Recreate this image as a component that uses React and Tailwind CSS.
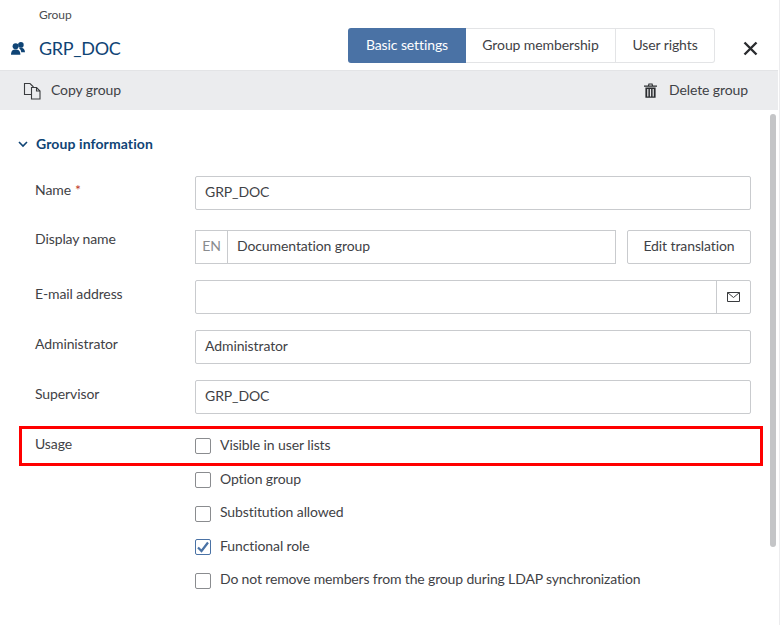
import React from "react";

const Row = ({ label, req, children, className = "mb-4", labelClass = "pt-[4px]" }) => (
  <div className={`flex items-start ${className}`}>
    <div className={`w-[160px] text-[#3f4246] leading-[20px] ${labelClass}`}>
      {label}
      {req && <span className="text-[#c0392b] ml-[4px]">*</span>}
    </div>
    <div className="flex-1 min-w-0 flex">{children}</div>
  </div>
);

const Input = ({ value }) => (
  <div className="flex-1 h-[34px] border border-[#c9cbce] rounded-[2px] px-[9px] pb-[3px] flex items-center text-[#3f4246]">{value}</div>
);

const Check = ({ label, checked, h, textClass = "-mt-[3px]" }) => (
  <div className={`flex items-center ${h}`}>
    <span className={`w-[16px] h-[16px] rounded-[2px] border flex items-center justify-center ${checked ? "border-[#4a72a5]" : "border-[#8a8c8f]"}`}>
      {checked && (
        <svg width="12" height="12" viewBox="0 0 12 12" fill="none" stroke="#4a72a5" strokeWidth="2.2">
          <path d="M1 6.5 L4.5 10 L11 1.5" />
        </svg>
      )}
    </span>
    <span className={`ml-[9px] text-[#3f4246] leading-[20px] ${textClass}`}>{label}</span>
  </div>
);

export default function App() {
  return (
    <div className="relative w-[780px] h-[625px] overflow-hidden bg-white text-[14px] tracking-[-0.1px]" style={{ fontFamily: 'Lato, sans-serif' }}>
      <div className="w-[778px] h-full flex flex-col">
        <header className="h-[71px] border-b border-[#e3e4e6] flex shrink-0">
          <div className="w-[348px] shrink-0 flex">
            <div className="pl-[11px] pt-[42px] w-[39px]">
              <svg width="14" height="13" viewBox="0 0 14 13" fill="#0f4475">
                <circle cx="4.6" cy="4.2" r="3" />
                <circle cx="9.9" cy="2.9" r="2.8" />
                <path d="M0 12.8 C0 8.6 2 7.4 4.6 7.4 C7.2 7.4 9.4 8.6 9.4 12.8 Z" />
                <path d="M8 6.2 C10.5 5.2 14 6.2 14 10.2 L10.2 10.2 C10.2 8.4 9.4 7 8 6.2 Z" />
              </svg>
            </div>
            <div className="flex flex-col">
              <div className="text-[12px] text-[#4a4d50] leading-[14px] pt-[8px]">Group</div>
              <div className="text-[#0f4475] text-[18px] tracking-[-0.3px] leading-[24px] mt-[14px]">GRP_DOC</div>
            </div>
          </div>
          <div className="flex h-[35px] mt-[28px] text-[14px] leading-none">
            <div className="w-[118px] bg-[#4a72a5] text-white rounded-l-[3px] flex items-center justify-center pb-[2px]">Basic settings</div>
            <div className="w-[150px] border-y border-r border-[#e3e4e6] text-[#3f4246] flex items-center justify-center pb-[2px]">Group membership</div>
            <div className="w-[99px] border-y border-r border-[#e3e4e6] rounded-r-[3px] text-[#3f4246] flex items-center justify-center pb-[2px]">User rights</div>
          </div>
          <div className="ml-[28px] mt-[41px]">
            <svg width="15" height="15" viewBox="0 0 15 15" stroke="#2a2c2f" strokeWidth="2.4" fill="none">
              <path d="M1.5 1.5 L13.5 13.5 M13.5 1.5 L1.5 13.5" />
            </svg>
          </div>
        </header>
        <div className="h-[39px] bg-[#ebecee] flex items-center justify-between shrink-0 pl-[23px] pr-[30px] text-[#3f4246]">
          <div className="flex items-center">
            <svg width="18" height="18" viewBox="0 0 18 18" fill="none" stroke="#3a3c3f" strokeWidth="1.1">
              <path d="M8.5 12.5 H1.5 V1.5 H7 L10.5 5" />
              <path d="M8.5 5.5 H13.5 L17 9 V17 H8.5 Z" />
              <path d="M13.5 5.5 V9 H17" />
            </svg>
            <span className="ml-[10px] -mt-[2px]">Copy group</span>
          </div>
          <div className="flex items-center">
            <svg width="13" height="15" viewBox="0 0 13 15" fill="#2a2c2f">
              <path d="M0 2.4 H13 V3.8 H0 Z M4 2.4 L4.5 0.4 H8.5 L9 2.4 H7.9 L7.6 1.4 H5.4 L5.1 2.4 Z" />
              <path d="M1.4 4.6 H11.6 V14.8 H1.4 Z M3.2 6 V13.4 H4.4 V6 Z M5.9 6 V13.4 H7.1 V6 Z M8.6 6 V13.4 H9.8 V6 Z" fillRule="evenodd" />
            </svg>
            <span className="ml-[12px] -mt-[2px]">Delete group</span>
          </div>
        </div>
        <main className="relative flex-1 pl-[35px] pr-[27px]">
          <div className="flex items-center h-[20px] mt-[24px] -ml-[17px]">
            <svg width="10" height="8" viewBox="0 0 10 8" fill="none" stroke="#0f4475" strokeWidth="1.6">
              <path d="M1 2 L5 6 L9 2" />
            </svg>
            <span className="ml-[8px] -mt-[2px] font-bold text-[#0f4475] tracking-[0.1px]">Group information</span>
          </div>
          <div className="mt-[22px]">
            <Row label="Name" req className="mb-5"><Input value="GRP_DOC" /></Row>
            <Row label="Display name" labelClass="-mt-[1px]">
              <div className="flex-1 h-[34px] border border-[#c9cbce] pb-[3px] flex items-center text-[#3f4246]">
                <span className="w-[32px] h-[32px] -mb-[3px] border-r border-[#c9cbce] flex items-center justify-center pb-[3px] text-[#8a8c8f]">EN</span>
                <span className="ml-[9px]">Documentation group</span>
              </div>
              <div className="w-[124px] ml-[11px] h-[34px] border border-[#c9cbce] rounded-[2px] pb-[3px] flex items-center justify-center text-[#3f4246]">Edit translation</div>
            </Row>
            <Row label="E-mail address">
              <div className="flex-1 h-[34px] border border-[#c9cbce] rounded-[2px] flex justify-end">
                <span className="w-[34px] border-l border-[#c9cbce] flex items-center justify-center">
                  <svg width="13" height="10" viewBox="0 0 13 10" fill="none" stroke="#3a3c3f" strokeWidth="1">
                    <path d="M0.5 0.5 H12.5 V9.5 H0.5 Z M0.5 0.5 L6.5 5.5 L12.5 0.5" />
                  </svg>
                </span>
              </div>
            </Row>
            <Row label="Administrator"><Input value="Administrator" /></Row>
            <Row label="Supervisor"><Input value="GRP_DOC" /></Row>
            <div className="flex items-start">
              <div className="w-[160px] text-[#3f4246] leading-[20px] pt-[4px]">Usage</div>
              <div className="flex-1 flex flex-col -mt-[1px]">
                <Check label="Visible in user lists" h="h-[34px]" />
                <Check label="Option group" h="h-[34px]" />
                <Check label="Substitution allowed" h="h-[33px]" />
                <Check label="Functional role" checked h="h-[34px]" />
                <Check label="Do not remove members from the group during LDAP synchronization" h="h-[34px]" textClass="-mt-[4px] tracking-[-0.15px]" />
              </div>
            </div>
          </div>
          <div className="absolute right-[2px] top-[4px] w-[6px] h-[433px] rounded-[3px] bg-[#c4c5c7]" />
        </main>
      </div>
      <div className="absolute top-0 right-0 w-[1px] h-full bg-[#ececee]" />
      <div className="absolute left-[19px] top-[426px] w-[744px] h-[40px] border-[3px] border-[#ff0000]" />
    </div>
  );
}
